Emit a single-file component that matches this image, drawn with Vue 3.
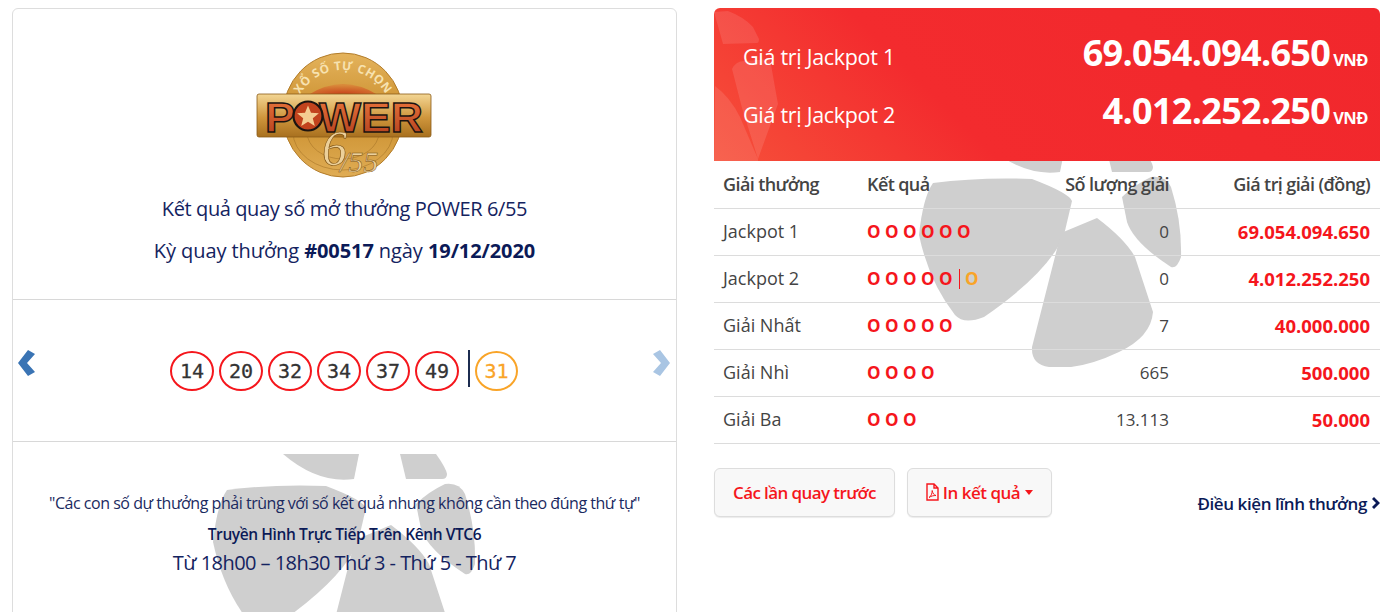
<template>
  <div class="page">
    <!-- cột trái -->
    <section class="card">
      <svg class="mark mark-left" viewBox="0 0 265 220"><path v-for="(d, i) in markPaths" :key="i" :d="d" /></svg>
      <div class="head">
        <svg class="logo" viewBox="0 0 176 126">
          <defs>
            <linearGradient id="gold" x1="0" y1="0" x2="0" y2="1">
              <stop offset="0" stop-color="#e4b35c" />
              <stop offset="0.5" stop-color="#c98d2c" />
              <stop offset="1" stop-color="#e0ad55" />
            </linearGradient>
            <linearGradient id="plate" x1="0" y1="0" x2="0" y2="1">
              <stop offset="0" stop-color="#f3d694" />
              <stop offset="0.55" stop-color="#cf963c" />
              <stop offset="1" stop-color="#a8701f" />
            </linearGradient>
            <linearGradient id="letter" x1="0" y1="0" x2="0" y2="1">
              <stop offset="0" stop-color="#ee7a3e" />
              <stop offset="1" stop-color="#ad3a1b" />
            </linearGradient>
            <radialGradient id="inner" cx="0.5" cy="0.9" r="0.8">
              <stop offset="0" stop-color="#c8431c" />
              <stop offset="1" stop-color="#d98a3a" />
            </radialGradient>
            <path id="arc" d="M 37 68 A 50 50 0 0 1 137 68" />
          </defs>
          <ellipse cx="87" cy="63" rx="60" ry="62" fill="url(#gold)" stroke="#b27c2a" />
          <path d="M52 43 Q87 21 122 43 Z" fill="url(#inner)" />
          <ellipse cx="87" cy="80" rx="50" ry="38" fill="none" stroke="#a87628" stroke-width="0.600" />
          <ellipse cx="87" cy="80" rx="36" ry="27" fill="none" stroke="#a87628" stroke-width="0.600" />
          <text class="logo-arc"><textPath href="#arc" startOffset="50%" text-anchor="middle">XỔ SỐ TỰ CHỌN</textPath></text>
          <rect x="1" y="42" width="174" height="43" rx="2" fill="url(#plate)" stroke="#8a5a16" stroke-width="0.800" />
          <text x="9" y="80" class="logo-power" textLength="30" lengthAdjust="spacingAndGlyphs">P</text>
          <text x="63" y="80" class="logo-power" textLength="104" lengthAdjust="spacingAndGlyphs">WER</text>
          <circle cx="52" cy="64" r="14.500" fill="#c2431d" stroke="#1c1410" stroke-width="2.200" />
          <path d="M52 53.500l3 7.300 7.900.500-6.100 5 2 7.700-6.800-4.200-6.800 4.200 2-7.700-6.100-5 7.900-.500z" fill="#f5cd92" />
          <text x="66" y="113" class="logo-six">6</text>
          <text x="84" y="120" class="logo-num">/55</text>
        </svg>
        <p class="title">Kết quả quay số mở thưởng POWER 6/55</p>
        <p class="draw">Kỳ quay thưởng <b>#00517</b> ngày <b>19/12/2020</b></p>
      </div>

      <div class="balls-row">
        <svg class="nav" viewBox="0 0 18 26"><path d="M10 0l7 4-8 9 8 9-7 4L0 13z" fill="#3a74b4" /></svg>
        <div class="balls">
          <span v-for="n in balls" :key="n" class="ball">{{ n }}</span>
          <i class="divider"></i>
          <span class="ball extra">31</span>
        </div>
        <svg class="nav" viewBox="0 0 18 26"><path d="M8 0L1 4l8 9-8 9 7 4 10-13z" fill="#a9c5e3" /></svg>
      </div>

      <div class="foot">
        <p class="rule">"Các con số dự thưởng phải trùng với số kết quả nhưng không cần theo đúng thứ tự"</p>
        <p class="live">Truyền Hình Trực Tiếp Trên Kênh VTC6</p>
        <p class="time">Từ 18h00 – 18h30 Thứ 3 - Thứ 5 - Thứ 7</p>
      </div>
    </section>

    <!-- cột phải -->
    <section class="side">
      <svg class="mark mark-right" viewBox="0 0 265 220"><path v-for="(d, i) in markPaths" :key="i" :d="d" /></svg>
      <div class="jackpot">
        <svg class="jackpot-shape" viewBox="0 0 70 153">
          <path d="M0 4L14 3Q30 9 39 19L45 31Q45 35 43 35L9 36Z" />
          <path d="M18 61Q22 53 30 53L56 51L64 96L44 151L28 100Z" />
          <path d="M1 78Q16 89 26 109L44 151V153H0Z" />
        </svg>
        <div v-for="j in jackpots" :key="j.name" class="jackpot-row">
          <span class="jackpot-name">{{ j.name }}</span>
          <span class="jackpot-value">{{ j.value }}<small>VNĐ</small></span>
        </div>
      </div>

      <table class="prizes">
        <thead>
          <tr>
            <th>Giải thưởng</th>
            <th>Kết quả</th>
            <th class="right">Số lượng giải</th>
            <th class="right">Giá trị giải (đồng)</th>
          </tr>
        </thead>
        <tbody>
          <tr v-for="p in prizes" :key="p.name">
            <td>{{ p.name }}</td>
            <td class="dots">
              <span v-for="n in p.dots" :key="n" class="dot">O</span>
              <template v-if="p.extra"><i class="dot-bar"></i><span class="dot orange">O</span></template>
            </td>
            <td class="right count">{{ p.count }}</td>
            <td class="right amount">{{ p.amount }}</td>
          </tr>
        </tbody>
      </table>

      <div class="actions">
        <button class="btn">Các lần quay trước</button>
        <button class="btn btn-print">
          <svg class="pdf" viewBox="0 0 13 18">
            <path d="M1 1h7l4 4v12H1z M8 1v4h4" fill="none" stroke="#f5161c" stroke-width="1.400" />
            <path d="M3 14.500c2-1 3.200-4 3.200-7 .500 3 1.800 4.500 3.800 5-2.500 0-4.800.500-7 2z" fill="none" stroke="#f5161c" stroke-width="1" />
          </svg>
          In kết quả
          <i class="caret"></i>
        </button>
        <a class="terms">Điều kiện lĩnh thưởng
          <svg class="terms-arrow" viewBox="0 0 8 12"><path d="M2 0l6 6-6 6-2-2 4-4-4-4z" fill="#0b1a57" /></svg>
        </a>
      </div>
    </section>
  </div>
</template>

<script setup>
const balls = [14, 20, 32, 34, 37, 49]

const jackpots = [
  { name: 'Giá trị Jackpot 1', value: '69.054.094.650' },
  { name: 'Giá trị Jackpot 2', value: '4.012.252.250' }
]

const prizes = [
  { name: 'Jackpot 1', dots: 6, count: '0', amount: '69.054.094.650' },
  { name: 'Jackpot 2', dots: 5, extra: true, count: '0', amount: '4.012.252.250' },
  { name: 'Giải Nhất', dots: 5, count: '7', amount: '40.000.000' },
  { name: 'Giải Nhì', dots: 4, count: '665', amount: '500.000' },
  { name: 'Giải Ba', dots: 3, count: '13.113', amount: '50.000' }
]

// hình nền mờ, toạ độ tính từ góc trên trái của ảnh
const markPaths = [
  'M70 0H146L141 25Q105 30 70 0Z',
  'M187 0H223Q233 14 234 20Q234 25 229 25H193Z',
  'M14 36Q60 30 113 32Q150 46 153 54L145 88Q130 125 65 170Q45 178 36 168Q10 135 0 88Q4 50 14 36Z',
  'M232 30Q246 28 252 40Q263 75 262 110Q258 122 252 120Q215 96 208 75L203 50Q215 38 232 30Z',
  'M178 71Q206 92 216 110L234 165Q232 190 200 205Q160 224 130 220Q112 218 113 200L142 86Z'
]
</script>

<style scoped>
.page {
  display: grid;
  grid-template-columns: 665px 666px;
  column-gap: 37px;
  padding: 8px 0 0 12px;
  height: 604px;
  overflow: hidden;
  font-family: "Open Sans", "Noto Sans", sans-serif;
  letter-spacing: -0.4px;
  color: #0b1a57;
}
p { margin: 0; }

.card {
  position: relative;
  height: 640px;
  box-sizing: border-box;
  border: 1px solid #ddd;
  border-radius: 6px;
  overflow: hidden;
  background: #fff;
}
.mark {
  position: absolute;
  width: 265px;
  height: 220px;
  fill: #cfcfcf;
}
.mark-left { left: 200px; top: 445px; }
.mark-right { left: 205px; top: 139px; }

.head {
  position: relative;
  height: 291px;
  box-sizing: border-box;
  padding-top: 43px;
  border-bottom: 1px solid #d8d8d8;
  text-align: center;
}
.logo {
  display: block;
  width: 176px;
  height: 126px;
  margin: 0 auto 17px;
  transform: translateX(-1px);
}
.logo-arc { font: 700 12px "Open Sans", sans-serif; fill: #f7e2b0; letter-spacing: 0.500px; }
.logo-power {
  font: 700 42px "Liberation Sans", sans-serif;
  fill: url(#letter);
  stroke: #1c1410;
  stroke-width: 1.400px;
  letter-spacing: 0;
}
.logo-six { font: italic 50px "Liberation Serif", serif; fill: #ecd09a; stroke: #7a4f12; stroke-width: 0.600px; letter-spacing: 0; }
.logo-num { font: italic 30px "Liberation Serif", serif; fill: #ecd09a; stroke: #7a4f12; stroke-width: 0.500px; letter-spacing: 0; }
.title { font-size: 20px; line-height: 28px; color: #14235f; }
.draw { margin-top: 14px; font-size: 20px; line-height: 28px; letter-spacing: -0.08px; color: #14235f; }
.draw b { color: #0b1a57; }

.balls-row {
  position: relative;
  height: 142px;
  box-sizing: border-box;
  border-bottom: 1px solid #d8d8d8;
  display: flex;
  justify-content: space-between;
  padding: 50px 6px 0 5px;
}
.nav { width: 18px; height: 26px; }
.balls {
  display: flex;
  align-items: flex-start;
  height: 40px;
}
.ball {
  box-sizing: border-box;
  width: 44px;
  height: 40px;
  margin-right: 5px;
  margin-top: 1px;
  border: 2px solid #f5161c;
  border-radius: 50%;
  display: flex;
  align-items: center;
  justify-content: center;
  font: 20px "DejaVu Sans Mono", monospace;
  letter-spacing: 0;
  color: #333;
  -webkit-text-stroke: 0.3px currentColor;
}
.ball.extra {
  width: 43px;
  margin-left: -1px;
  border: 2px solid #f9a428;
  color: #f9a428;
  margin-right: 0;
}
.divider {
  width: 2px;
  height: 37px;
  margin: 0 6px 0 4px;
  background: #1c2c50;
}

.foot {
  position: relative;
  padding-top: 50px;
  text-align: center;
}
.rule { font-size: 16px; line-height: 22px; letter-spacing: -0.47px; color: #1b2a5f; }
.live { margin-top: 10px; font-size: 15.500px; line-height: 20px; font-weight: 600; color: #0b1a57; }
.time { margin-top: 5px; font-size: 20px; line-height: 28px; letter-spacing: -0.55px; color: #14235f; }

.side {
  position: relative;
  height: 604px;
}
.jackpot {
  position: relative;
  height: 153px;
  box-sizing: border-box;
  padding: 15px 12px 0 29px;
  border-radius: 6px 6px 0 0;
  background: linear-gradient(45deg, #f6503a 0%, #f32b2e 35%, #f1272c 100%);
  color: #fff;
  overflow: hidden;
}
.jackpot-shape {
  position: absolute;
  left: 0;
  top: 0;
  width: 70px;
  height: 153px;
  fill: #fff;
  fill-opacity: 0.11;
}
.jackpot-row {
  position: relative;
  display: flex;
  justify-content: space-between;
  align-items: center;
  height: 58px;
}
.jackpot-name { margin-top: 8px; font-size: 21.500px; letter-spacing: -0.3px; }
.jackpot-value { font-size: 36px; font-weight: 700; letter-spacing: -0.7px; }
.jackpot-value small { margin-left: 3px; font-size: 16.500px; font-weight: 700; letter-spacing: -0.5px; }

.prizes {
  position: relative;
  width: 100%;
  border-collapse: collapse;
  table-layout: fixed;
  font-size: 18px;
  letter-spacing: 0;
  color: #444;
}
.prizes th, .prizes td {
  box-sizing: border-box;
  height: 47px;
  padding: 0 10px 1px 9px;
  border-bottom: 1px solid #dcdcdc;
  text-align: left;
}
.prizes th { font-weight: 600; font-size: 18px; letter-spacing: -0.6px; color: #444; }
.prizes th:nth-child(1) { width: 144px; }
.prizes th:nth-child(2) { width: 145px; }
.prizes th:nth-child(4) { width: 201px; }
.prizes .right { text-align: right; }
.count { font-size: 17px; }
.dots { white-space: nowrap; }
.dot {
  display: inline-block;
  width: 18px;
  font-size: 17px;
  font-weight: 700;
  letter-spacing: 0;
  color: #f5161c;
}
.dot.orange { color: #f9a428; }
.dot-bar {
  display: inline-block;
  width: 1px;
  height: 20px;
  margin: 0 5px 0 2px;
  vertical-align: -4px;
  background: #f5161c;
}
.amount { font-size: 18.500px; font-weight: 700; color: #f5161c; }

.actions {
  position: relative;
  display: flex;
  align-items: flex-start;
  gap: 12px;
  margin-top: 24px;
}
.btn {
  height: 49px;
  padding: 0 18px;
  border: 1px solid #ddd;
  border-radius: 6px;
  background: #f8f8f8;
  box-shadow: 0 1px 1px rgba(0, 0, 0, 0.08);
  font: 600 17px "Open Sans", sans-serif;
  letter-spacing: -0.6px;
  color: #f5161c;
}
.btn-print {
  display: flex;
  align-items: center;
  gap: 4px;
  letter-spacing: -0.5px;
}
.pdf { width: 13px; height: 18px; }
.caret {
  width: 0;
  height: 0;
  margin-left: 1px;
  border-left: 4.500px solid transparent;
  border-right: 4.500px solid transparent;
  border-top: 5px solid #f5161c;
}
.terms {
  margin-left: auto;
  margin-top: 24px;
  display: flex;
  align-items: center;
  gap: 5px;
  font-size: 17px;
  font-weight: 600;
  color: #0b1a57;
}
.terms-arrow { width: 8px; height: 12px; }
</style>
